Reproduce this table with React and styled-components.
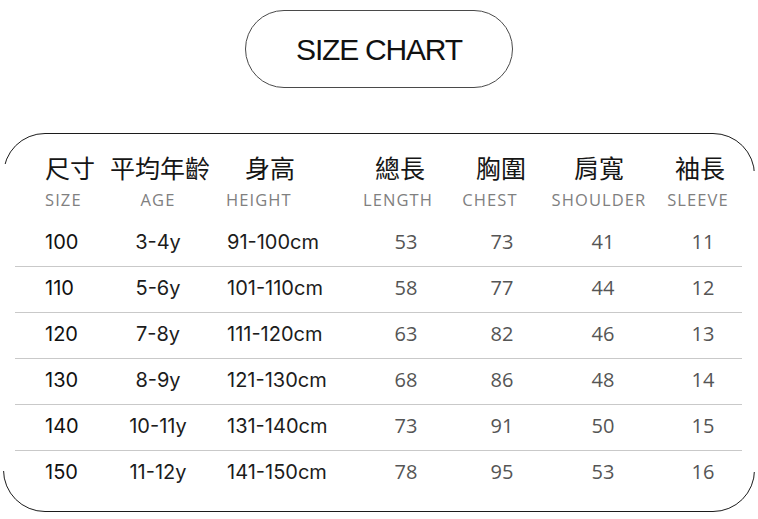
import React from 'react';
import styled, { createGlobalStyle } from 'styled-components';

const GlobalStyle = createGlobalStyle`
    html, body {
        margin: 0;
        padding: 0;
        background: #ffffff;
    }
    body {
        width: 758px;
        height: 519px;
        overflow: hidden;
        font-family: "Inter", "Liberation Sans", sans-serif;
    }
`;

// column widths, left to right, across the 727px between the dividers' ends
const colTemplate = '95px 96px 144px 106px 86px 116px 84px';

const columns = [
    { cn: '尺寸', en: 'SIZE', align: 'left', pad: 30, cnPad: 30, enPad: 30, kind: 'size' },
    { cn: '平均年齡', en: 'AGE', align: 'center', kind: 'dark' },
    { cn: '身高', en: 'HEIGHT', align: 'left', pad: 21, cnPad: 39, enPad: 20, kind: 'dark' },
    { cn: '總長', en: 'LENGTH', align: 'center', cnShift: -3, enShift: -5, kind: 'gray' },
    { cn: '胸圍', en: 'CHEST', align: 'center', cnShift: 2, enShift: -9, kind: 'gray' },
    { cn: '肩寬', en: 'SHOULDER', align: 'center', cnShift: -1, enShift: -1, kind: 'gray' },
    { cn: '袖長', en: 'SLEEVE', align: 'center', cnShift: 0, enShift: -2, kind: 'gray' },
];

const rows = [
    ['100', '3-4y', '91-100cm', '53', '73', '41', '11'],
    ['110', '5-6y', '101-110cm', '58', '77', '44', '12'],
    ['120', '7-8y', '111-120cm', '63', '82', '46', '13'],
    ['130', '8-9y', '121-130cm', '68', '86', '48', '14'],
    ['140', '10-11y', '131-140cm', '73', '91', '50', '15'],
    ['150', '11-12y', '141-150cm', '78', '95', '53', '16'],
];

const Page = styled.div`
    display: flex;
    flex-direction: column;
    align-items: flex-start;
`;

const TitlePill = styled.div`
    box-sizing: border-box;
    align-self: center;
    width: 268px;
    height: 78px;
    margin-top: 10px;
    border: 1px solid #4a4a4a;
    border-radius: 39px;
    display: flex;
    align-items: center;
    justify-content: center;
`;

const Title = styled.h1`
    margin: 2px 0 0 0;
    font-family: "Liberation Sans", Arial, sans-serif;
    font-weight: 400;
    font-size: 30px;
    letter-spacing: -1.2px;
    color: #111111;
`;

const Frame = styled.div`
    position: relative;
    box-sizing: border-box;
    width: 752px;
    margin: 45px 0 0 3px;
    padding: 18px 12px 14px 11px;
    border: 1.3px solid #1c1c1c;
    border-radius: 42px;

    /* the side lines are open between the rounded corners */
    &::before,
    &::after {
        content: '';
        position: absolute;
        width: 6px;
        background: #ffffff;
    }
    &::before {
        left: -4px;
        top: 30px;
        bottom: 40px;
    }
    &::after {
        right: -4px;
        top: 37px;
        bottom: 39px;
    }
`;

const HeadRow = styled.div`
    display: grid;
    grid-template-columns: ${colTemplate};
    margin-bottom: ${p => p.$gap}px;
`;

const HeadCn = styled.div`
    font-family: "Noto Sans CJK TC", "Noto Sans CJK SC", sans-serif;
    font-size: 25px;
    line-height: 30px;
    color: #161616;
    white-space: nowrap;
    text-align: ${p => p.$align};
    padding-left: ${p => p.$pad || 0}px;
    transform: translateX(${p => p.$shift || 0}px);
`;

const HeadEn = styled.div`
    font-family: "Open Sans", "Liberation Sans", sans-serif;
    font-size: 16.5px;
    line-height: 20px;
    letter-spacing: 1.1px;
    color: #808080;
    white-space: nowrap;
    text-align: ${p => p.$align};
    padding-left: ${p => p.$pad || 0}px;
    transform: translateX(${p => p.$shift || 0}px);
`;

const Row = styled.div`
    box-sizing: border-box;
    display: grid;
    grid-template-columns: ${colTemplate};
    align-items: center;
    height: 46px;
    padding-bottom: 4px;
    border-bottom: 1px solid ${p => (p.$last ? 'transparent' : '#c9c9c9')};
`;

const Cell = styled.div`
    white-space: nowrap;
    font-size: 20px;
    line-height: 24px;
    text-align: ${p => p.$align};
    padding-left: ${p => p.$pad || 0}px;
    font-family: ${p => (p.$kind === 'gray'
        ? '"Open Sans", "Liberation Sans", sans-serif'
        : '"Inter", "Liberation Sans", sans-serif')};
    font-weight: 400;
    color: ${p => (p.$kind === 'gray' ? '#555555' : p.$kind === 'size' ? '#111111' : '#1c1c1c')};
    transform: translateX(${p => (p.$kind === 'gray' ? 3 : 0)}px);
`;

export default function App() {
    return (
        <Page>
            <GlobalStyle />
            <TitlePill>
                <Title>SIZE CHART</Title>
            </TitlePill>
            <Frame>
                <HeadRow $gap={8}>
                    {columns.map(c => (
                        <HeadCn key={c.cn} $align={c.align} $pad={c.cnPad} $shift={c.cnShift}>
                            {c.cn}
                        </HeadCn>
                    ))}
                </HeadRow>
                <HeadRow $gap={11}>
                    {columns.map(c => (
                        <HeadEn key={c.en} $align={c.align} $pad={c.enPad} $shift={c.enShift}>
                            {c.en}
                        </HeadEn>
                    ))}
                </HeadRow>
                {rows.map((r, i) => (
                    <Row key={r[0]} $last={i === rows.length - 1}>
                        {r.map((v, j) => (
                            <Cell
                                key={j}
                                $align={columns[j].align}
                                $pad={columns[j].pad}
                                $kind={columns[j].kind}
                            >
                                {v}
                            </Cell>
                        ))}
                    </Row>
                ))}
            </Frame>
        </Page>
    );
}
